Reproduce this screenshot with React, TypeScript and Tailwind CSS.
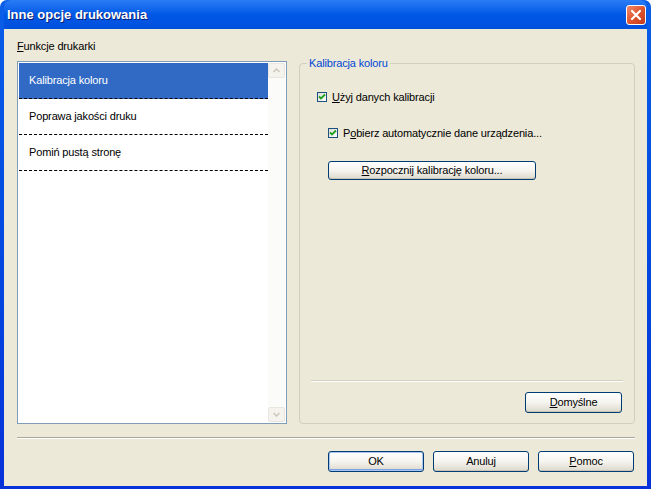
import React from "react";

const FONT = { fontFamily: '"Liberation Sans", Arial, sans-serif' };

function XpButton({
  label,
  accessKey,
  className = "",
  isDefault = false,
}: {
  label: string;
  accessKey?: number;
  className?: string;
  isDefault?: boolean;
}) {
  const text =
    accessKey === undefined ? (
      label
    ) : (
      <>
        {label.slice(0, accessKey)}
        <span className="underline">{label[accessKey]}</span>
        {label.slice(accessKey + 1)}
      </>
    );
  return (
    <button
      className={`flex items-center justify-center rounded-[3px] border border-[#003c74] bg-gradient-to-b from-[#ffffff] via-[#f5f4ef] to-[#dcd8cb] text-[11px] leading-none text-black ${
        isDefault ? "shadow-[inset_0_0_0_1px_#a8c4f0,inset_0_-1px_0_1px_#7ea2e6]" : "shadow-[inset_0_-1px_0_#c9c4b5]"
      } ${className}`}
    >
      {text}
    </button>
  );
}

function XpCheckbox() {
  return (
    <span className="flex h-[10px] w-[10px] items-center justify-center border border-[#1c5180] bg-gradient-to-br from-[#dcdcd5] to-[#ffffff]">
      <svg width="8" height="8" viewBox="0 0 8 8">
        <path d="M1 3.5 L3 5.5 L7 1.5" fill="none" stroke="#21a121" strokeWidth="1.8" />
      </svg>
    </span>
  );
}

export default function App() {
  const items = ["Kalibracja koloru", "Poprawa jakości druku", "Pomiń pustą stronę"];

  return (
    <div
      style={FONT}
      className="flex h-[489px] w-[651px] flex-col rounded-t-[7px] bg-gradient-to-b from-[#0a5ee8] to-[#0831d9] px-[4px] pb-[3px]"
    >
      {/* Title bar */}
      <div className="flex h-[29px] items-center justify-between rounded-t-[7px] bg-gradient-to-b from-[#2a7cf5] via-[#0058e6] to-[#0050dc] pr-[1px] pl-[3px]">
        <span className="text-[13px] font-bold text-white [text-shadow:1px_1px_0_#0a1e6e]">
          Inne opcje drukowania
        </span>
        <div className="flex h-[20px] w-[20px] items-center justify-center rounded-[3px] border border-white bg-gradient-to-br from-[#f08a6a] via-[#e0552f] to-[#c4391a]">
          <svg width="12" height="12" viewBox="0 0 12 12">
            <path d="M2 2 L10 10 M10 2 L2 10" stroke="white" strokeWidth="2.2" strokeLinecap="round" />
          </svg>
        </div>
      </div>

      {/* Client area */}
      <div className="flex flex-1 flex-col bg-[#ece9d8] pt-[11px] pr-[12px] pl-[13px] tracking-[-0.15px]">
        <div className="h-[13px] text-[11px] leading-[13px] text-black">
          <span className="underline">F</span>unkcje drukarki
        </div>

        <div className="mt-[8px] flex gap-[12px]">
          {/* List box */}
          <div className="flex h-[363px] w-[270px] border border-[#7f9db9] bg-white p-[1px]">
            <div className="flex flex-1 flex-col">
              {items.map((it, i) => (
                <div
                  key={it}
                  className={`flex h-[36px] items-center border-b border-dashed border-black pl-[10px] text-[11px] ${
                    i === 0 ? "bg-[#316ac5] text-white" : "text-black"
                  }`}
                >
                  {it}
                </div>
              ))}
            </div>
            <div className="flex w-[17px] flex-col justify-between bg-[#fbfbf9]">
              <div className="flex h-[15px] items-center justify-center rounded-[2px] border border-[#e8e6df] bg-[#f4f3ee]">
                <svg width="7" height="5" viewBox="0 0 7 5">
                  <path d="M0.5 4 L3.5 1 L6.5 4" fill="none" stroke="#c9c7ba" strokeWidth="1.4" />
                </svg>
              </div>
              <div className="flex h-[15px] items-center justify-center rounded-[2px] border border-[#e8e6df] bg-[#f4f3ee]">
                <svg width="7" height="5" viewBox="0 0 7 5">
                  <path d="M0.5 1 L3.5 4 L6.5 1" fill="none" stroke="#c9c7ba" strokeWidth="1.4" />
                </svg>
              </div>
            </div>
          </div>

          {/* Group box */}
          <div className="relative mt-[2px] flex h-[361px] flex-1 flex-col rounded-[4px] border border-[#d0d0bf] pt-[26px]">
            <span className="absolute -top-[8px] left-[7px] bg-[#ece9d8] px-[2px] text-[11px] leading-[14px] text-[#0046d5]">
              Kalibracja koloru
            </span>

            <div className="ml-[17px] flex h-[14px] items-center gap-[5px] text-[11px] text-black">
              <XpCheckbox />
              <span>
                <span className="underline">U</span>żyj danych kalibracji
              </span>
            </div>

            <div className="mt-[22px] ml-[28px] flex h-[14px] items-center gap-[5px] text-[11px] text-black">
              <XpCheckbox />
              <span>
                P<span className="underline">o</span>bierz automatycznie dane urządzenia...
              </span>
            </div>

            <XpButton
              label="Rozpocznij kalibrację koloru..."
              accessKey={0}
              className="mt-[21px] ml-[28px] h-[19px] w-[208px]"
            />

            <div className="flex-1" />

            <div className="mx-[11px] border-t border-b border-t-[#d0d0bf] border-b-white" />

            <div className="mt-[10px] mb-[10px] flex justify-end pr-[12px]">
              <XpButton label="Domyślne" accessKey={0} className="h-[21px] w-[97px]" />
            </div>
          </div>
        </div>

        <div className="mt-[13px] border-t border-b border-t-[#aca899] border-b-white" />

        <div className="mt-[12px] flex justify-end gap-[9px] pr-[1px]">
          <XpButton label="OK" isDefault className="h-[21px] w-[96px]" />
          <XpButton label="Anuluj" className="h-[21px] w-[96px]" />
          <XpButton label="Pomoc" accessKey={0} className="h-[21px] w-[96px]" />
        </div>
      </div>
    </div>
  );
}
